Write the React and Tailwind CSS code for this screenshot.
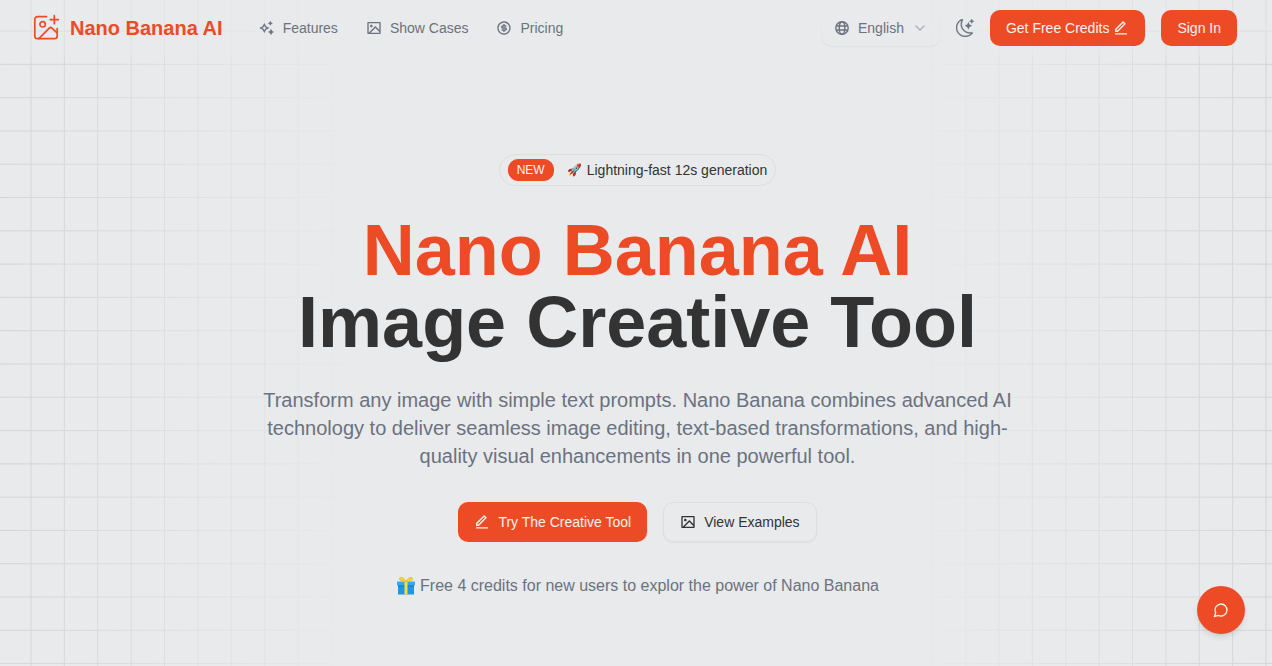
import React from 'react';
import { ChevronDown } from 'lucide-react';
import { RiSparkling2Line, RiImageLine, RiMoneyDollarCircleLine, RiEditLine } from 'react-icons/ri';
import { BsMoonStars } from 'react-icons/bs';

const navLinks = [
  { label: 'Features', href: '#features', Icon: RiSparkling2Line },
  { label: 'Show Cases', href: '#showcases', Icon: RiImageLine },
  { label: 'Pricing', href: '#pricing', Icon: RiMoneyDollarCircleLine },
];

function Logo() {
  return (
    <svg
      className="size-7"
      viewBox="0 0 28 28"
      fill="none"
      stroke="currentColor"
      strokeWidth="1.7"
      strokeLinecap="round"
      strokeLinejoin="round"
      aria-hidden="true"
    >
      <path d="M14.500 2.600H5.500a2.700 2.700 0 0 0-2.700 2.700v16.700a2.700 2.700 0 0 0 2.700 2.700h17a2.700 2.700 0 0 0 2.700-2.700V14.500" />
      <circle cx="10.600" cy="10.300" r="2.700" />
      <path d="M6.800 24.700l10.500-10.500c.8-.8 1.900-.8 2.700 0l5 4.600" />
      <path d="M22.300 1.700v8M18.300 5.700h8" />
    </svg>
  );
}

function GlobeIcon() {
  return (
    <svg className="size-4" viewBox="0 0 16 16" fill="none" stroke="currentColor" strokeWidth="1.4" aria-hidden="true">
      <circle cx="8" cy="8" r="6.200" />
      <ellipse cx="8" cy="8" rx="2.800" ry="6.200" />
      <path d="M2.200 6h11.600M2.200 10h11.600" />
    </svg>
  );
}

function GiftIcon() {
  return (
    <svg className="size-5" viewBox="0 0 20 20" aria-hidden="true">
      <path d="M2 7h16v11.500H2z" fill="#2196e3" />
      <path d="M1 5.500h18v4H1z" fill="#35a9f1" />
      <path d="M2 9.500h16v1H2z" fill="#1976c5" />
      <path d="M8.500 5.500h3v13h-3z" fill="#fbdc3e" />
      <path
        d="M10 5.500C8.500 1.500 4 .5 3.500 2.500S7 5.500 10 5.500zM10 5.500c1.500-4 6-5 6.500-3s-3.500 3-6.500 3z"
        fill="#f8d23a"
        stroke="#e9b92c"
        strokeWidth="0.8"
      />
    </svg>
  );
}

function ChatIcon() {
  return (
    <svg
      className="size-4"
      viewBox="0 0 24 24"
      fill="none"
      stroke="currentColor"
      strokeWidth="2"
      strokeLinecap="round"
      strokeLinejoin="round"
      aria-hidden="true"
    >
      <path d="M7.900 20A9 9 0 1 0 4 16.100L2 22Z" />
    </svg>
  );
}

// Decorative grid, fades out towards the middle of the page
function GridBackground() {
  return (
    <div className="pointer-events-none absolute inset-0 [mask-image:linear-gradient(to_right,black,transparent_28%,transparent_72%,black)]">
      <svg className="h-full w-full text-[#d2d4d6]" aria-hidden="true">
        <defs>
          <pattern id="grid" x="30.5" y="-2.700" width="33.38" height="33.29" patternUnits="userSpaceOnUse">
            <path d="M0.500 0V34M0 0.500H34" fill="none" stroke="currentColor" />
          </pattern>
        </defs>
        <rect width="100%" height="100%" fill="url(#grid)" />
      </svg>
    </div>
  );
}

function Header() {
  return (
    <header className="relative flex h-14 items-center justify-between bg-[#e8eaeb]/40 pr-[35px] pl-8">
      <div className="flex items-center">
        <a href="#" className="flex items-center gap-2.5 text-xl font-bold text-[#ed4b26]">
          <Logo />
          Nano Banana AI
        </a>
        <nav className="ml-9 flex items-center gap-7">
          {navLinks.map(({ label, href, Icon }) => (
            <a key={label} href={href} className="flex items-center gap-2 text-sm text-[#6b7280]">
              <Icon className="size-4" />
              {label}
            </a>
          ))}
        </nav>
      </div>

      <div className="flex items-center gap-4">
        <div className="flex items-center gap-4">
          <button
            type="button"
            className="flex h-9 items-center gap-2 rounded-[10px] px-3 text-sm text-[#6b7280] shadow-xs"
          >
            <GlobeIcon />
            English
            <ChevronDown className="size-4 opacity-50" />
          </button>
          <button type="button" aria-label="Toggle theme" className="text-[#6b7280]">
            <BsMoonStars className="size-[18px] stroke-current stroke-[0.2]" />
          </button>
        </div>
        <button
          type="button"
          className="flex h-9 items-center gap-1 rounded-[10px] bg-[#ed4b26] px-4 text-sm text-[#fdf3ee]"
        >
          Get Free Credits
          <RiEditLine className="size-4" />
        </button>
        <button type="button" className="h-9 rounded-[10px] bg-[#ed4b26] px-4 text-sm text-[#fdf3ee]">
          Sign In
        </button>
      </div>
    </header>
  );
}

function Hero() {
  return (
    <main className="relative flex flex-col items-center pt-[98px] pb-[68px] pl-[3px] text-center">
      <a
        href="#generator"
        className="flex h-8 items-center gap-3 rounded-full border border-[#dcdfe1] px-2 text-sm text-[#333333]"
      >
        <span className="rounded-[10px] border border-[#ed4b26] bg-[#ed4b26] px-2 py-0.5 text-xs text-[#fdf3ee]">
          NEW
        </span>
        <span className="flex items-center gap-1">
          <span className="w-[17px] text-xs">🚀</span>
          Lightning-fast 12s generation
        </span>
      </a>

      <h1 className="mt-7 text-7xl leading-none font-bold text-[#333333]">
        <span className="block text-[#ed4b26]">Nano Banana AI</span>
        <span className="block">Image Creative Tool</span>
      </h1>

      <p className="mt-7 max-w-3xl text-xl text-[#6b7280]">
        Transform any image with simple text prompts. Nano Banana combines advanced AI technology to deliver seamless
        image editing, text-based transformations, and high-quality visual enhancements in one powerful tool.
      </p>

      <div className="mt-8 flex items-center gap-4">
        <button
          type="button"
          className="flex h-10 items-center gap-2 rounded-[10px] bg-[#ed4b26] px-4 text-sm text-[#fdf3ee]"
        >
          <RiEditLine className="size-4" />
          Try The Creative Tool
        </button>
        <button
          type="button"
          className="flex h-10 items-center gap-2 rounded-[10px] border border-[#dcdfe1] px-4 text-sm text-[#333333] shadow-xs"
        >
          <RiImageLine className="size-4" />
          View Examples
        </button>
      </div>

      <p className="mt-8 flex items-center gap-1 text-base text-[#6b7280]">
        <GiftIcon />
        Free 4 credits for new users to explor the power of Nano Banana
      </p>
    </main>
  );
}

export default function App() {
  return (
    <div className="relative min-h-screen overflow-hidden bg-[#e8eaeb] font-['Liberation_Sans',Arial,sans-serif]">
      <GridBackground />
      <Header />
      <Hero />
      <button
        type="button"
        aria-label="Open chat"
        className="fixed right-[27px] bottom-8 flex size-12 items-center justify-center rounded-full bg-[#ed4b26] text-[#fdf3ee] shadow-md"
      >
        <ChatIcon />
      </button>
    </div>
  );
}
